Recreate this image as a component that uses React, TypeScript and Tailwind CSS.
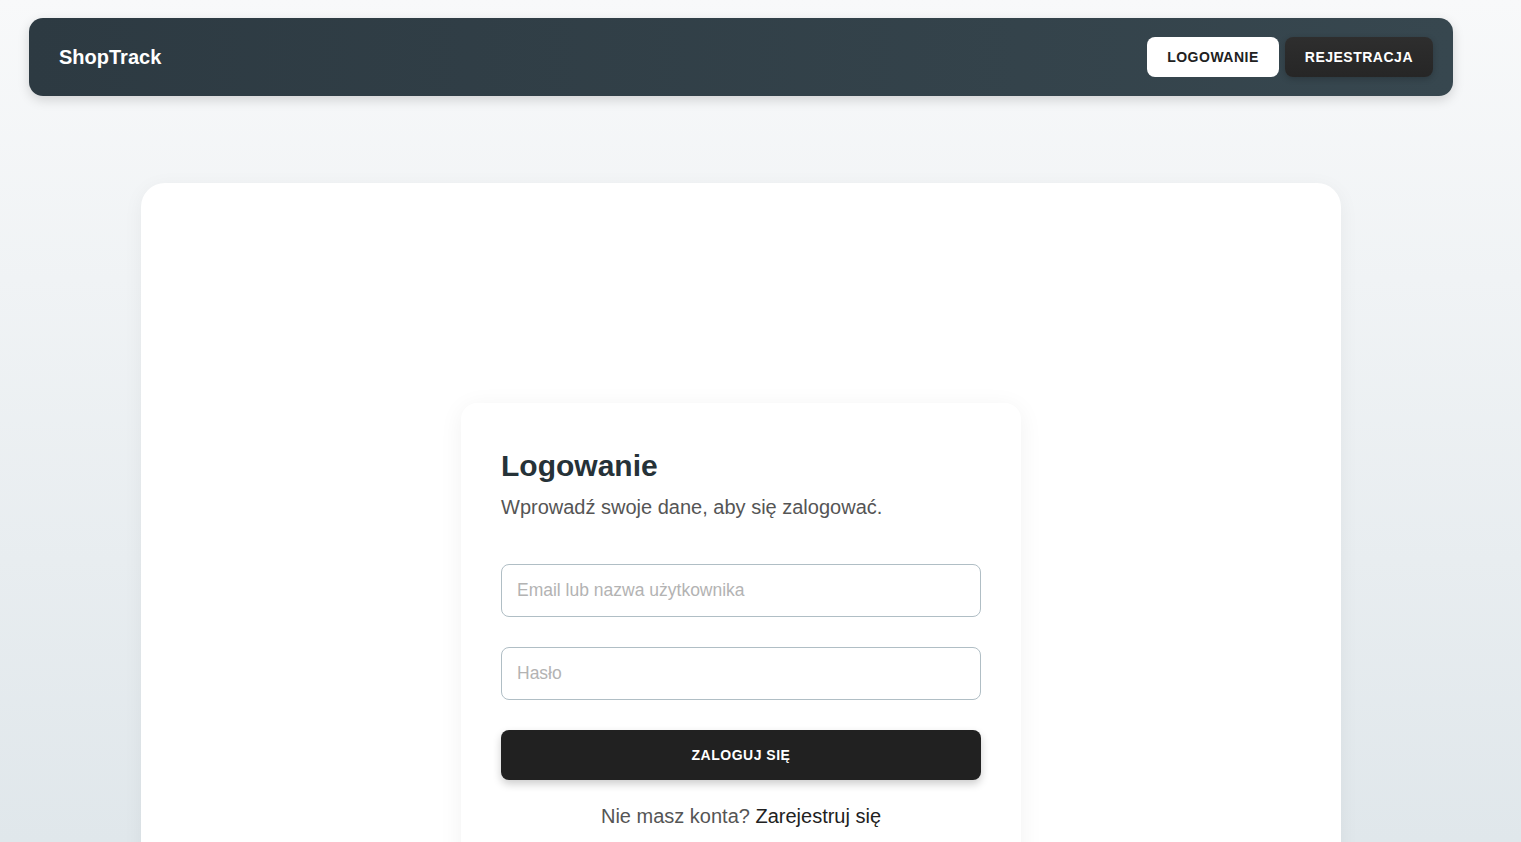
const App = () => {
  return (
    <div
      className="min-h-[842px] h-[842px] overflow-hidden bg-gradient-to-b from-[#f8f9fa] to-[#e0e7eb]"
      style={{ fontFamily: '"Liberation Sans", Arial, sans-serif' }}
    >
      <div className="w-[1482px] px-[29px] pt-[18px]">
        <nav className="h-[78px] rounded-[14px] bg-gradient-to-r from-[#2d3a42] to-[#37474f] shadow-[0_4px_12px_rgba(0,0,0,0.15)] flex items-center justify-between pl-[30px] pr-[20px]">
          <span className="text-white text-[20px] font-bold">ShopTrack</span>
          <div className="flex items-center gap-[6px]">
            <button className="h-[40px] px-[20px] rounded-[8px] bg-white text-[#212121] text-[14px] font-bold tracking-[0.5px]">
              LOGOWANIE
            </button>
            <button className="h-[40px] px-[20px] rounded-[8px] bg-gradient-to-b from-[#2e2e2e] to-[#262626] text-white text-[14px] font-bold tracking-[0.5px] shadow-[0_2px_6px_rgba(0,0,0,0.2)]">
              REJESTRACJA
            </button>
          </div>
        </nav>

        <main className="w-[1200px] mx-auto mt-[87px] bg-white rounded-[24px] shadow-[0_4px_20px_rgba(0,0,0,0.05)] pt-[220px] pb-[60px] flex justify-center">
          <div className="w-[560px] rounded-[16px] bg-white shadow-[0_4px_24px_rgba(0,0,0,0.06)] px-[40px] pt-[44px] pb-[40px]">
            <h1 className="text-[30px] leading-[38px] font-bold text-[#263238]">Logowanie</h1>
            <p className="mt-[8px] text-[20px] leading-[28px] text-[#555555]">
              Wprowadź swoje dane, aby się zalogować.
            </p>

            <form className="mt-[43px] flex flex-col gap-[30px]">
              <input
                type="text"
                placeholder="Email lub nazwa użytkownika"
                className="h-[53px] w-full rounded-[8px] border border-[#b0bec5] px-[15px] text-[17.5px] text-[#212121] placeholder:text-[#b3b3b3] outline-none"
              />
              <input
                type="password"
                placeholder="Hasło"
                className="h-[53px] w-full rounded-[8px] border border-[#b0bec5] px-[15px] text-[17.5px] text-[#212121] placeholder:text-[#b3b3b3] outline-none"
              />
              <button
                type="button"
                className="h-[50px] w-full rounded-[8px] bg-[#212121] text-white text-[14px] font-bold tracking-[0.5px] shadow-[0_4px_8px_rgba(0,0,0,0.2)]"
              >
                ZALOGUJ SIĘ
              </button>
            </form>

            <p className="mt-[22px] text-center text-[20px] leading-[28px] text-[#555555]">
              Nie masz konta? <a href="#" className="text-[#212121]">Zarejestruj się</a>
            </p>
          </div>
        </main>
      </div>
    </div>
  );
};

export default App;
